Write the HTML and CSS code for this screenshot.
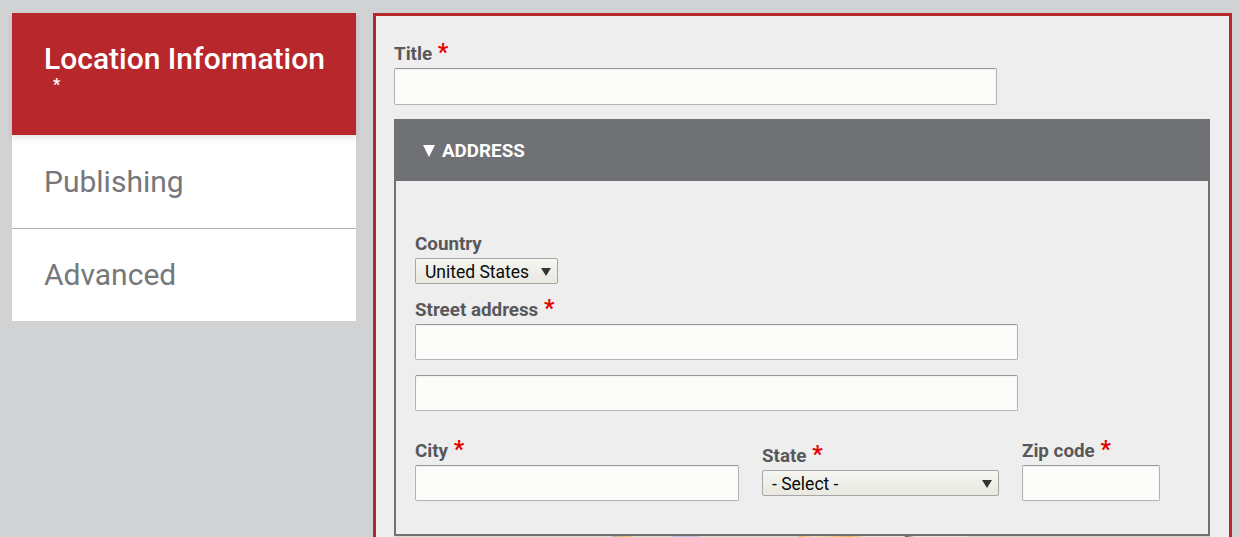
FILE: index.html
```html
<!DOCTYPE html>
<html lang="en">
<head>
<meta charset="utf-8">
<title>Location form</title>
<link rel="stylesheet" href="styles.css">
</head>
<body>
<div class="page">
  <nav class="tabs">
    <a class="tab tab-active"><span class="tab-title">Location Information</span><span class="tab-star">*</span></a>
    <a class="tab">Publishing</a>
    <a class="tab tab-last">Advanced</a>
  </nav>
  <main class="panel">
    <div class="field field-title">
      <label class="label">Title <span class="req">*</span></label>
      <input class="input input-title" type="text">
    </div>
    <section class="group">
      <h2 class="group-head"><span class="caret"></span>ADDRESS</h2>
      <div class="group-body">
        <div class="field field-country">
          <label class="label">Country</label>
          <div class="select select-country"><span>United States</span></div>
        </div>
        <div class="field field-street">
          <label class="label">Street address <span class="req">*</span></label>
          <input class="input input-wide" type="text">
          <input class="input input-wide input-second" type="text">
        </div>
        <div class="row">
          <div class="field col-city">
            <label class="label">City <span class="req">*</span></label>
            <input class="input input-city" type="text">
          </div>
          <div class="field col-state">
            <label class="label">State <span class="req">*</span></label>
            <div class="select select-state"><span>- Select -</span></div>
          </div>
          <div class="field col-zip">
            <label class="label">Zip code <span class="req">*</span></label>
            <input class="input input-zip" type="text">
          </div>
        </div>
      </div>
      <div class="map"></div>
    </section>
  </main>
</div>
</body>
</html>
```
FILE: styles.css
```css
html, body { margin: 0; padding: 0; height: 537px; overflow: hidden; }
body { background: #d1d2d4; font-family: Roboto, "Liberation Sans", sans-serif; color: #58585a; }
.page { display: flex; align-items: flex-start; gap: 17px; padding: 13px 8px 0 12px; }

.tabs { width: 344px; flex: none; background: #fff; display: flex; flex-direction: column; }
.tab { display: block; box-sizing: border-box; height: 94px; padding: 27px 32px 0; font-size: 30px; line-height: 40px; color: #76777a; border-bottom: 1px solid #b3b3b1; }
.tab-last { height: 92px; border-bottom: 0; padding-top: 26px; }
.tab-active { height: 122px; background: #b7272b; color: #fff; border-bottom: 0; padding: 26px 0 0 32px; font-weight: 500; font-size: 30px; line-height: 40px; box-shadow: 0 3px 6px rgba(0,0,0,.12); position: relative; }
.tab-title { display: block; white-space: nowrap; }
.tab-star { display: block; font-size: 16px; line-height: 20px; font-weight: 700; padding-left: 9px; margin-top: -4px; }

.panel { width: 859px; box-sizing: border-box; height: 540px; flex: none; background: #eee; border: 3px solid #b7272b; border-bottom: 0; padding: 27px 18px 0; }
.field { display: flex; flex-direction: column; align-items: flex-start; }
.label { display: block; font-size: 18.8px; line-height: 22px; font-weight: 700; color: #58585a; }
.req { color: #e60000; font-size: 23px; line-height: 18px; margin-left: 1px; }
.input { display: block; box-sizing: border-box; height: 36px; margin: 0; padding: 0 8px; background: #fcfcfa; border: 1px solid #b3b3b3; border-top-color: #959595; border-radius: 2px; box-shadow: inset 0 1px 2px rgba(0,0,0,.05); outline: 0; }
.input-title { width: 603px; height: 37px; margin-top: 3px; }
.input-wide { width: 603px; }
.input-city { width: 324px; }
.input-zip { width: 138px; }

.group { margin-top: 14px; width: 816px; }
.group-head { margin: 0; height: 62px; box-sizing: border-box; background: #707175; color: #fff; font-size: 18.8px; font-weight: 700; padding: 1px 0 0 29px; display: flex; align-items: center; }
.caret { width: 0; height: 0; border-left: 6.5px solid transparent; border-right: 6.5px solid transparent; border-top: 12px solid #fff; margin: 0 7px 0 0; }
.group-body { height: 355px; box-sizing: border-box; border: 2px solid #707175; border-top: 0; padding: 52px 19px 0; }

.select { position: relative; box-sizing: border-box; height: 26px; font-size: 17.5px; line-height: 26px; color: #0a0a0a; padding-left: 9px; background: linear-gradient(#f6f6f2, #e8e8e0); border: 1px solid #a6a6a6; border-radius: 2px; }
.select::after { content: ""; position: absolute; right: 6px; top: 9px; border-left: 5px solid transparent; border-right: 5px solid transparent; border-top: 8px solid #333; }
.select-country { width: 143px; }
.select-state { width: 237px; }
.field-country .select { margin-top: 3px; }
.field-street { margin-top: 15px; }
.field-street .input { margin-top: 3px; }
.field-street .input-second { margin-top: 15px; }

.row { display: flex; margin-top: 29px; gap: 23px; align-items: flex-start; }
.row .input { margin-top: 3px; }
.col-state { padding-top: 5px; }
.col-state .select { margin-top: 3px; }
.map { height: 4px; background: linear-gradient(90deg, #d3e3d1 0, #d3e3d1 218px, #b5b5b5 218px, #e8c860 236px, #d3e3d1 240px, #d3e3d1 278px, #b4c6e6 278px, #b4c6e6 305px, #d3e3d1 305px, #d3e3d1 405px, #e8b84a 405px, #e8e4d0 420px, #e8b84a 455px, #e8e4d0 470px, #e8e4d0 510px, #555 512px, #e8e4d0 520px, #e8e4d0 574px, #c9dec9 576px, #c9dec9 100%); }
```
